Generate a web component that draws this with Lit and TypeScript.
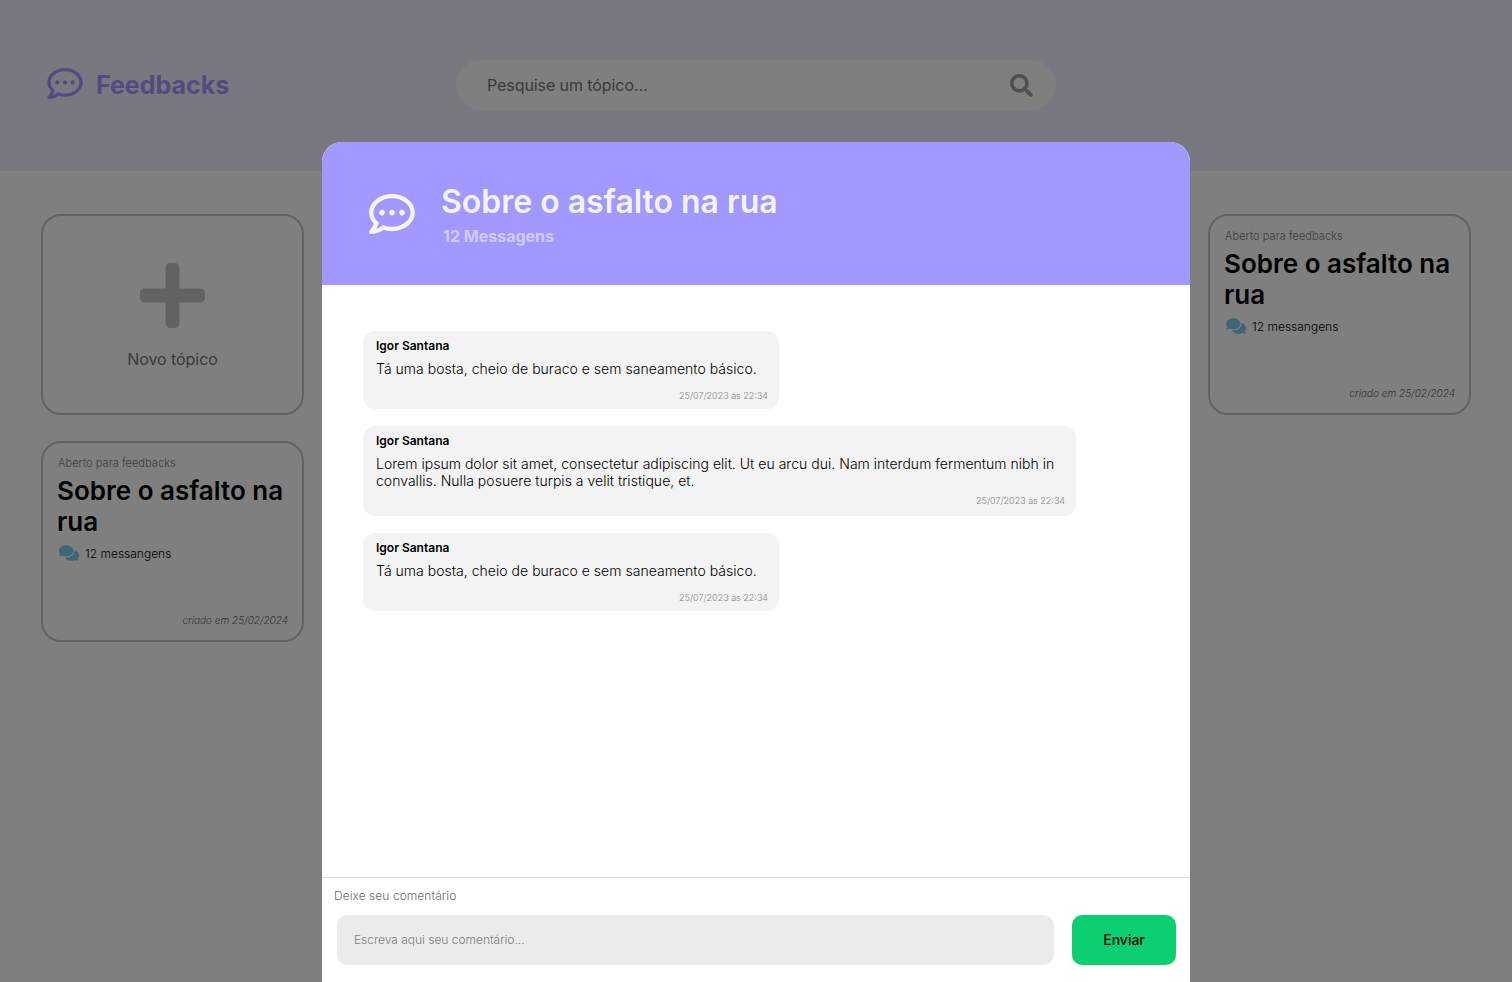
import { LitElement, html, svg, css } from "lit";
import { customElement, property } from "lit/decorators.js";

const ICONS: Record<string, { box: string; path: string }> = {
  dots: {
    box: "0 32 512 448",
    path: "M144 208c-17.7 0-32 14.3-32 32s14.3 32 32 32 32-14.3 32-32-14.3-32-32-32zm112 0c-17.7 0-32 14.3-32 32s14.3 32 32 32 32-14.3 32-32-14.3-32-32-32zm112 0c-17.7 0-32 14.3-32 32s14.3 32 32 32 32-14.3 32-32-14.3-32-32-32zM256 32C114.6 32 0 125.1 0 240c0 47.6 19.9 91.2 52.9 126.3C38 405.7 7 439.1 6.5 439.5c-6.6 7-8.4 17.2-4.6 26S14.4 480 24 480c61.5 0 110-25.7 139.1-46.3C192 442.8 223.2 448 256 448c141.4 0 256-93.1 256-208S397.4 32 256 32zm0 368c-26.7 0-53.1-4.1-78.4-12.1l-22.7-7.2-19.5 13.8c-14.3 10.1-33.9 21.4-57.5 29 7.3-12.1 14.4-25.7 19.9-40.2l10.6-28.1-20.6-21.8C69.7 314.1 48 282.2 48 240c0-88.2 93.3-160 208-160s208 71.8 208 160-93.3 160-208 160z",
  },
  search: {
    box: "0 0 512 512",
    path: "M505 442.7L405.3 343c-4.5-4.5-10.6-7-17-7H372c27.6-35.3 44-79.7 44-128C416 93.1 322.9 0 208 0S0 93.1 0 208s93.1 208 208 208c48.3 0 92.7-16.4 128-44v16.3c0 6.4 2.5 12.5 7 17l99.7 99.7c9.4 9.4 24.6 9.4 33.9 0l28.3-28.3c9.4-9.4 9.4-24.6.1-34zM208 336c-70.7 0-128-57.2-128-128 0-70.7 57.2-128 128-128 70.7 0 128 57.2 128 128 0 70.7-57.2 128-128 128z",
  },
  plus: {
    box: "0 32 448 448",
    path: "M416 208H272V64c0-17.67-14.33-32-32-32h-32c-17.67 0-32 14.33-32 32v144H32c-17.67 0-32 14.33-32 32v32c0 17.67 14.33 32 32 32h144v144c0 17.67 14.33 32 32 32h32c17.67 0 32-14.33 32-32V304h144c17.67 0 32-14.33 32-32v-32c0-17.67-14.33-32-32-32z",
  },
  comments: {
    box: "0 32 576 448",
    path: "M416 192c0-88.4-93.1-160-208-160S0 103.6 0 192c0 34.3 14.1 65.9 38 92-13.4 30.2-35.5 54.2-35.8 54.5-2.2 2.3-2.8 5.7-1.5 8.7S4.8 352 8 352c36.6 0 66.9-12.3 88.7-25 32.2 15.7 70.3 25 111.3 25 114.9 0 208-71.6 208-160zm122 220c23.9-26 38-57.7 38-92 0-66.9-53.5-124.2-129.3-148.1.9 6.6 1.3 13.3 1.3 20.1 0 105.9-107.7 192-240 192-10.8 0-21.3-.8-31.7-1.9C207.8 439.6 281.8 480 368 480c41 0 79.1-9.2 111.3-25 21.8 12.7 52.1 25 88.7 25 3.2 0 6.1-1.9 7.3-4.8 1.3-2.9.7-6.3-1.5-8.7-.3-.2-22.4-24.2-35.8-54.5z",
  },
};

const icon = (name: string, cls: string) => html`
  <svg class=${cls} viewBox=${ICONS[name].box} fill="currentColor" aria-hidden="true">
    ${svg`<path d=${ICONS[name].path}></path>`}
  </svg>`;

@customElement("topic-card")
export class TopicCard extends LitElement {
  static styles = css`
    :host {
      display: flex;
      flex-direction: column;
      box-sizing: border-box;
      width: 263px;
      height: 201px;
      border: 2px solid #c4c4c4;
      border-radius: 20px;
      padding: 13px 14px 13px 14px;
    }
    .status { font-size: 11px; line-height: 14px; font-weight: 300; letter-spacing: 0.06px; color: #7d7d7d; padding-left: 1px; }
    .title { margin: 5px 0 0; font-size: 26px; line-height: 31px; font-weight: 600; color: #000; }
    .count { display: flex; align-items: flex-start; gap: 6px; margin-top: 8px; padding-left: 2px; font-size: 12px; line-height: 16px; font-weight: 300; color: #000; }
    .count span { padding-top: 1px; }
    .chat { width: 20px; height: 16px; color: #7accea; }
    .date { margin-top: auto; font-size: 10px; line-height: 14px; font-weight: 300; font-style: italic; text-align: right; color: #6b6b6b; }
  `;
  @property() heading = "";
  @property({ type: Number }) count = 0;
  @property() date = "";
  render() {
    return html`
      <div class="status">Aberto para feedbacks</div>
      <h2 class="title">${this.heading}</h2>
      <div class="count">${icon("comments", "chat")}<span>${this.count} messangens</span></div>
      <div class="date">criado em ${this.date}</div>
    `;
  }
}

@customElement("chat-message")
export class ChatMessage extends LitElement {
  static styles = css`
    :host {
      display: block;
      box-sizing: border-box;
      max-width: 713px;
      background: #f3f3f3;
      border-radius: 12px;
      padding: 7px 11px 7px 13px;
    }
    .author { font-size: 12px; line-height: 16px; font-weight: 600; color: #000; }
    .text { margin: 6px 5px 0 0; font-size: 14px; line-height: 17px; font-weight: 300; letter-spacing: 0.025px; color: #000; }
    .time { margin-top: 13px; font-size: 9px; line-height: 12px; font-weight: 300; color: #858585; text-align: right; }
    :host([multiline]) { padding-bottom: 9px; }
    :host([multiline]) .time { margin-top: 6px; }
  `;
  @property() author = "";
  @property() text = "";
  @property() time = "";
  render() {
    return html`
      <div class="author">${this.author}</div>
      <div class="text">${this.text}</div>
      <div class="time">${this.time}</div>
    `;
  }
}

const SHORT = "Tá uma bosta, cheio de buraco e sem saneamento básico.";
const LONG =
  "Lorem ipsum dolor sit amet, consectetur adipiscing elit. Ut eu arcu dui. Nam interdum fermentum nibh in convallis. Nulla posuere turpis a velit tristique, et.";
const MESSAGES = [
  { text: SHORT, multiline: false },
  { text: LONG, multiline: true },
  { text: SHORT, multiline: false },
];

@customElement("app-root")
export class AppRoot extends LitElement {
  static styles = css`
    :host {
      display: block;
      position: relative;
      width: 100%;
      height: 100vh;
      overflow: hidden;
      background: #fff;
      font-family: Inter, sans-serif;
    }
    * { box-sizing: border-box; }
    .topbar {
      display: grid;
      grid-template-columns: 409px 600px;
      align-items: center;
      height: 171px;
      padding: 0 0 1px 47px;
      background: #f3efff;
    }
    .brand { display: flex; align-items: center; gap: 13px; color: #a199ff; }
    .brand-icon { width: 36px; height: 31px; margin-bottom: 3px; }
    .brand-name { font-size: 25px; line-height: 32px; font-weight: 700; }
    .search {
      display: flex;
      align-items: center;
      justify-content: space-between;
      height: 50px;
      padding: 0 23px 0 31px;
      border-radius: 25px;
      background: #fff;
      font-size: 16px;
      font-weight: 400;
      letter-spacing: -0.08px;
      color: #757575;
    }
    .search-icon { width: 23px; height: 23px; color: #a0a0a0; }
    .topics {
      display: grid;
      grid-template-columns: 263px 263px;
      justify-content: space-between;
      gap: 26px;
      padding: 43px 41px;
    }
    .new {
      display: flex;
      flex-direction: column;
      align-items: center;
      width: 263px;
      height: 201px;
      padding-top: 47px;
      border: 2px solid #c4c4c4;
      border-radius: 20px;
      font-size: 16px;
      line-height: 20px;
      font-weight: 400;
      letter-spacing: -0.05px;
      color: #757575;
    }
    .plus { width: 65px; height: 65px; margin-bottom: 21px; color: #c4c4c4; }
    .overlay {
      position: absolute;
      inset: 0;
      display: flex;
      justify-content: center;
      padding-top: 142px;
      background: rgba(0, 0, 0, 0.5);
    }
    .modal {
      display: flex;
      flex-direction: column;
      width: 868px;
      height: 100%;
      border-radius: 20px 20px 0 0;
      overflow: hidden;
      background: #fff;
    }
    .modal-head {
      display: flex;
      align-items: center;
      gap: 26px;
      height: 143px;
      padding-left: 47px;
      background: #a199ff;
      color: rgba(255, 255, 255, 0.9);
    }
    .modal-icon { width: 46px; height: 40px; }
    .modal-title { margin: 0; font-size: 32px; line-height: 39px; font-weight: 600; letter-spacing: -0.02px; }
    .modal-sub { margin: 5px 0 0 2px; font-size: 16px; line-height: 20px; font-weight: 700; color: rgba(255, 255, 255, 0.5); }
    .thread {
      flex: 1;
      display: flex;
      flex-direction: column;
      align-items: flex-start;
      gap: 17px;
      padding: 46px 41px 0;
    }
    .thread chat-message { min-width: 416px; }
    .composer { margin: 0 1px; padding: 9px 13px 17px 11px; border-top: 1px solid #d9d9d9; }
    .label { font-size: 12px; line-height: 18px; font-weight: 300; letter-spacing: 0.05px; color: #6b6b6b; }
    .row { display: flex; gap: 18px; margin: 10px 0 0 3px; height: 50px; }
    .field {
      flex: 1;
      display: flex;
      align-items: center;
      padding: 0 0 1px 17px;
      border-radius: 10px;
      background: #ebebeb;
      font-size: 12px;
      font-weight: 300;
      letter-spacing: -0.02px;
      color: #7d7d7d;
    }
    .send {
      width: 104px;
      border: 0;
      padding: 0 0 1px;
      border-radius: 10px;
      background: #0ccf71;
      color: #000;
      font: 500 14px/17px Inter, sans-serif;
    }
  `;
  render() {
    const card = html`<topic-card heading="Sobre o asfalto na rua" count="12" date="25/02/2024"></topic-card>`;
    return html`
      <header class="topbar">
        <div class="brand">${icon("dots", "brand-icon")}<span class="brand-name">Feedbacks</span></div>
        <div class="search"><span>Pesquise um tópico...</span>${icon("search", "search-icon")}</div>
      </header>
      <main class="topics">
        <div class="new">${icon("plus", "plus")}<span>Novo tópico</span></div>
        ${card} ${card}
      </main>
      <div class="overlay">
        <section class="modal">
          <div class="modal-head">
            ${icon("dots", "modal-icon")}
            <div>
              <h1 class="modal-title">Sobre o asfalto na rua</h1>
              <div class="modal-sub">12 Messagens</div>
            </div>
          </div>
          <div class="thread">
            ${MESSAGES.map(
              (m) => html`<chat-message
                author="Igor Santana"
                time="25/07/2023 às 22:34"
                .text=${m.text}
                ?multiline=${m.multiline}
              ></chat-message>`
            )}
          </div>
          <div class="composer">
            <div class="label">Deixe seu comentário</div>
            <div class="row">
              <div class="field">Escreva aqui seu comentário...</div>
              <button class="send">Enviar</button>
            </div>
          </div>
        </section>
      </div>
    `;
  }
}
